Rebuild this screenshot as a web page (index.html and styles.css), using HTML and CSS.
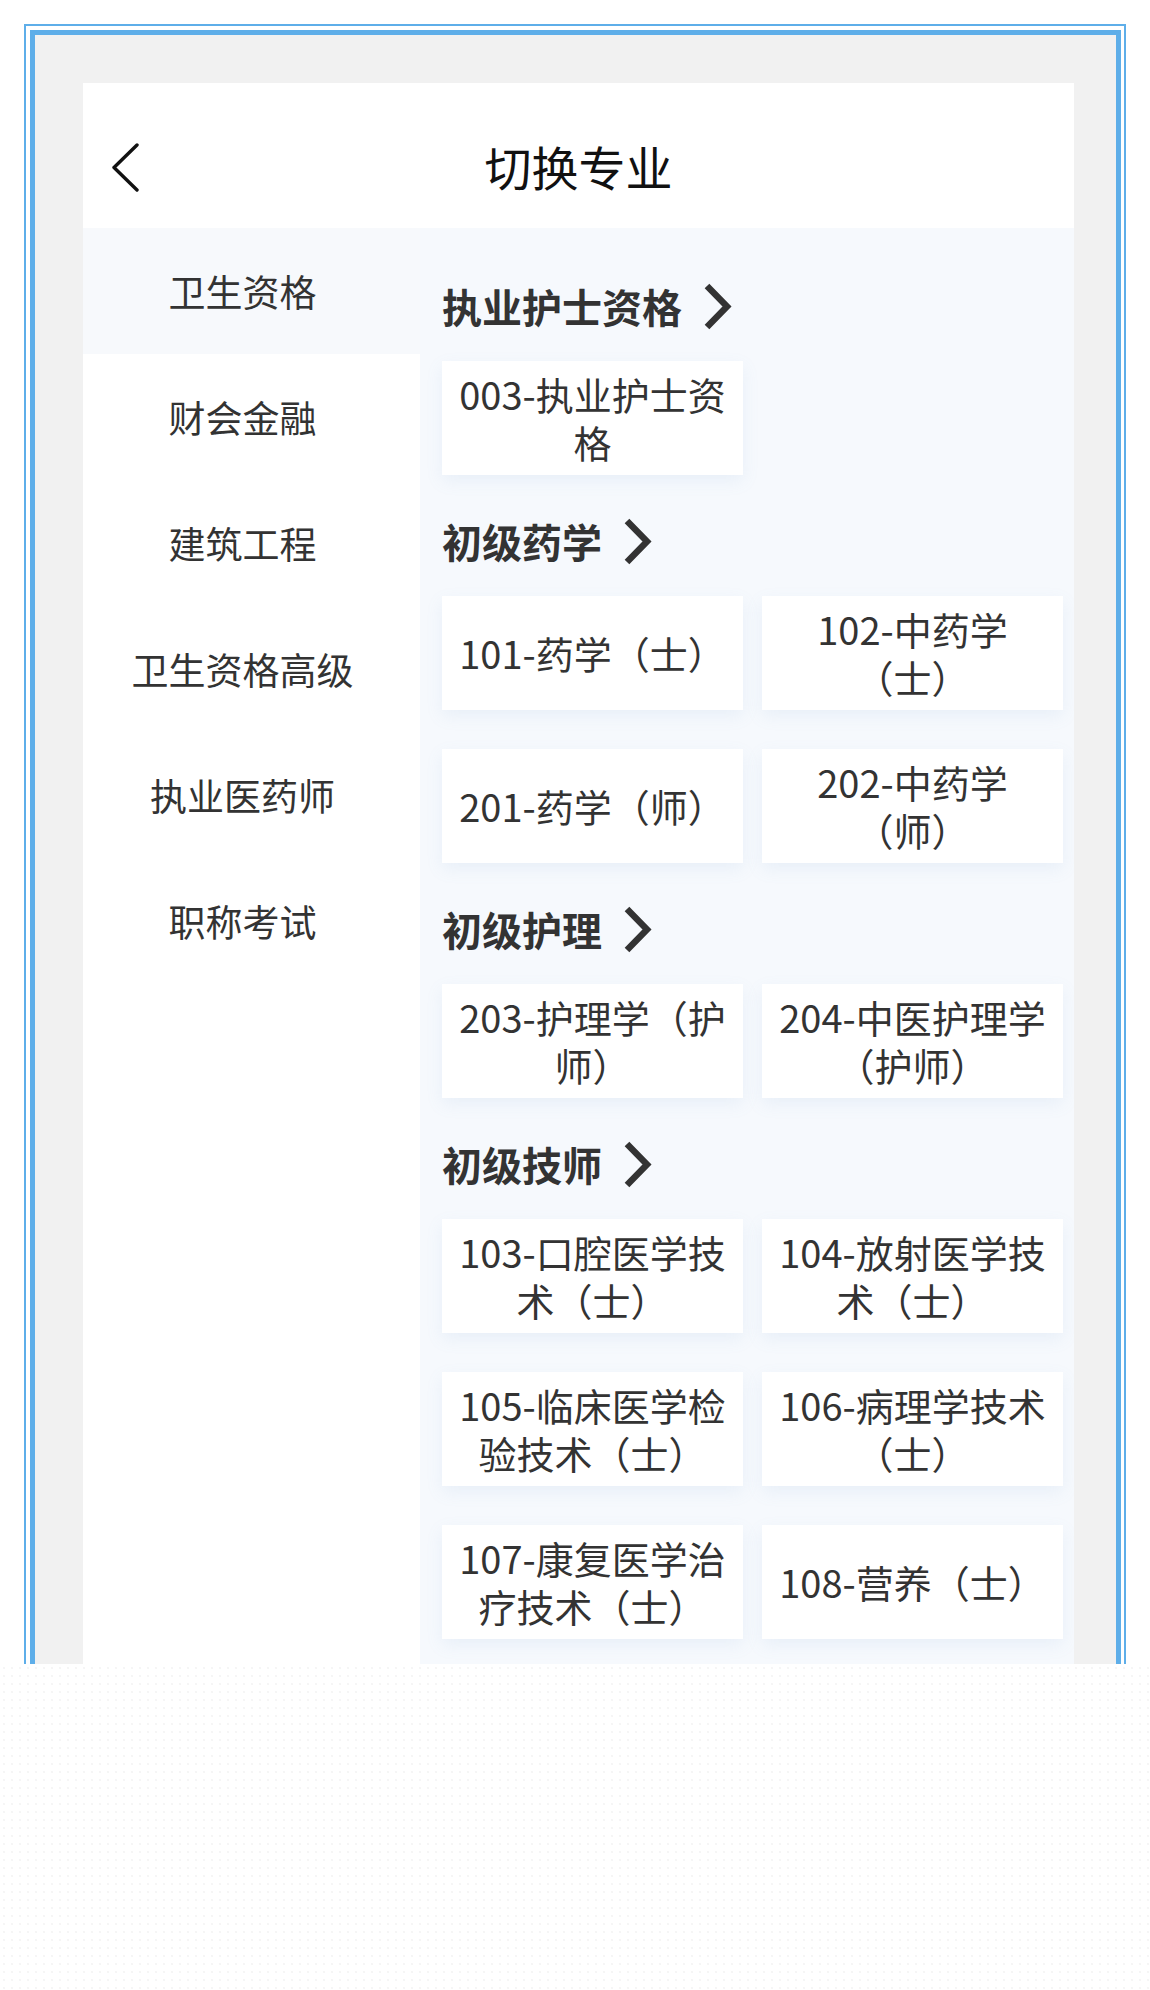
FILE: index.html
```html
<!DOCTYPE html>
<html lang="zh-CN">
<head>
  <meta charset="UTF-8" />
  <meta name="viewport" content="width=device-width, initial-scale=1.0"/>
  <title>切换专业</title>
  <link rel="stylesheet" href="styles.css">
</head>
<body>
  <div class="frame">
    <div class="frame-inner">
      <div class="page">
        <header class="topbar">
          <svg class="back" viewBox="0 0 29 49" width="29" height="49">
            <polyline points="26,2 3,24.5 26,47" fill="none" stroke="#111" stroke-width="3.4" stroke-linecap="round" stroke-linejoin="round"/>
          </svg>
          <h1>切换专业</h1>
        </header>

        <div class="body">
          <ul class="sidebar">
            <li class="active">卫生资格</li>
            <li>财会金融</li>
            <li>建筑工程</li>
            <li>卫生资格高级</li>
            <li>执业医药师</li>
            <li>职称考试</li>
          </ul>

          <div class="content">
            <section class="group">
              <h2>执业护士资格
                <svg class="arrow" viewBox="0 0 29 47" width="29" height="47"><polyline points="4,3 24,23.5 4,44" fill="none" stroke="#333" stroke-width="6.5"/></svg>
              </h2>
              <div class="grid">
                <div class="item">003-执业护士资格</div>
              </div>
            </section>

            <section class="group">
              <h2>初级药学
                <svg class="arrow" viewBox="0 0 29 47" width="29" height="47"><polyline points="4,3 24,23.5 4,44" fill="none" stroke="#333" stroke-width="6.5"/></svg>
              </h2>
              <div class="grid">
                <div class="item">101-药学（士）</div>
                <div class="item">102-中药学（士）</div>
                <div class="item">201-药学（师）</div>
                <div class="item">202-中药学（师）</div>
              </div>
            </section>

            <section class="group">
              <h2>初级护理
                <svg class="arrow" viewBox="0 0 29 47" width="29" height="47"><polyline points="4,3 24,23.5 4,44" fill="none" stroke="#333" stroke-width="6.5"/></svg>
              </h2>
              <div class="grid">
                <div class="item">203-护理学（护师）</div>
                <div class="item">204-中医护理学（护师）</div>
              </div>
            </section>

            <section class="group">
              <h2>初级技师
                <svg class="arrow" viewBox="0 0 29 47" width="29" height="47"><polyline points="4,3 24,23.5 4,44" fill="none" stroke="#333" stroke-width="6.5"/></svg>
              </h2>
              <div class="grid">
                <div class="item">103-口腔医学技术（士）</div>
                <div class="item">104-放射医学技术（士）</div>
                <div class="item">105-临床医学检验技术（士）</div>
                <div class="item">106-病理学技术（士）</div>
                <div class="item">107-康复医学治疗技术（士）</div>
                <div class="item">108-营养（士）</div>
              </div>
            </section>
          </div>
        </div>
      </div>
    </div>
  </div>
  <div class="below"></div>
</body>
</html>
```

FILE: styles.css
```css
* {
  box-sizing: border-box;
  font-family: "Noto Sans CJK SC", "Noto Sans", sans-serif;
}

body {
  margin: 0;
  background: #ffffff;
  color: #333;
}

/* screenshot frame */
.frame {
  margin: 24px 24px 0 24px;
  width: 1102px;
  height: 1640px;
  border: 2px solid #5eaee9;
  border-bottom: none;
  padding: 4px 3px 0 4px;
  background: #ffffff;
  overflow: hidden;
}

.frame-inner {
  height: 100%;
  border: 5px solid #5eaee9;
  border-bottom: none;
  background: #f1f1f1;
  padding: 48px 42px 0 48px;
}

.page {
  height: 100%;
  background: #ffffff;
  display: flex;
  flex-direction: column;
}

.topbar {
  height: 145px;
  padding-top: 20px;
  display: flex;
  align-items: center;
  justify-content: center;
  position: relative;
}

.back {
  position: absolute;
  left: 28px;
  top: 60px;
}

h1 {
  margin: 0;
  font-size: 47px;
  font-weight: 400;
  color: #111;
  line-height: 60px;
}

.body {
  flex: 1;
  display: flex;
  min-height: 0;
}

.sidebar {
  list-style: none;
  margin: 0;
  padding: 0;
  width: 337px;
  background: #ffffff;
}

.sidebar li {
  height: 126px;
  display: flex;
  align-items: center;
  justify-content: center;
  padding-right: 18px;
  font-size: 37px;
  color: #333;
}

.sidebar li.active {
  background: #f7f9fc;
}

.content {
  flex: 1;
  background: #f6f9fd;
  padding: 54px 9px 0 22px;
  overflow: hidden;
}

.group + .group {
  margin-top: 42px;
}

h2 {
  margin: 0 0 31px 0;
  height: 48px;
  display: flex;
  align-items: center;
  gap: 21px;
  font-size: 40px;
  font-weight: 700;
  color: #333;
  line-height: 48px;
}

.arrow {
  flex-shrink: 0;
}

.grid {
  display: grid;
  grid-template-columns: 301px 301px;
  gap: 39px 19px;
}

.item {
  height: 114px;
  background: #ffffff;
  display: flex;
  align-items: center;
  justify-content: center;
  text-align: center;
  padding: 0 12px;
  font-size: 38px;
  line-height: 48px;
  color: #333;
  box-shadow: 0 6px 16px rgba(120, 155, 210, 0.1);
}

.below {
  height: 326px;
  background-image: radial-gradient(circle, #f5f5f5 0.7px, transparent 1.1px);
  background-size: 8px 8px;
}
```
